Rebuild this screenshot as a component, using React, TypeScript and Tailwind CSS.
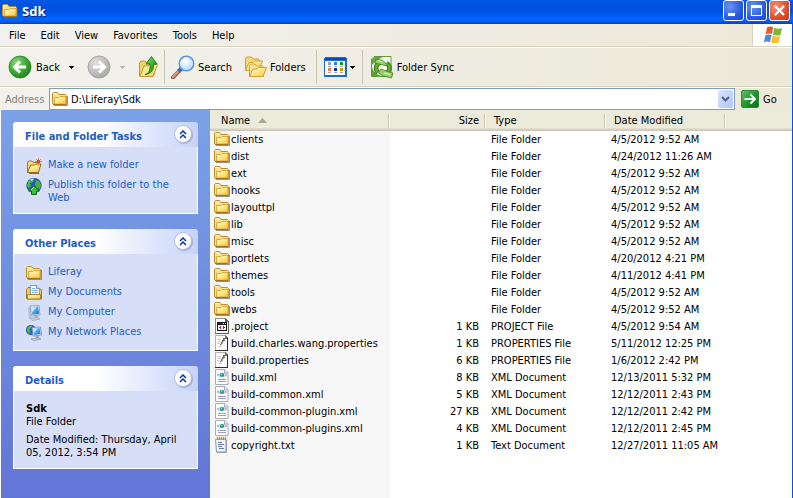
import React from 'react';

type IconProps = { className?: string };

function Gradients() {
  return (
    <svg width="0" height="0" className="absolute" aria-hidden="true">
      <defs>
        <linearGradient id="folderFront" x1="0" y1="0" x2="1" y2="1">
          <stop offset="0" stopColor="#fffbc4" />
          <stop offset="0.5" stopColor="#ffe784" />
          <stop offset="1" stopColor="#f5bf3c" />
        </linearGradient>
        <radialGradient id="greenBall" cx="0.35" cy="0.3" r="0.8">
          <stop offset="0" stopColor="#8fdc7c" />
          <stop offset="0.5" stopColor="#3fae34" />
          <stop offset="1" stopColor="#1c7d1c" />
        </radialGradient>
        <radialGradient id="grayBall" cx="0.35" cy="0.3" r="0.8">
          <stop offset="0" stopColor="#e0e0de" />
          <stop offset="0.6" stopColor="#bcbcba" />
          <stop offset="1" stopColor="#a3a3a1" />
        </radialGradient>
        <linearGradient id="arrowUp" x1="0" y1="0" x2="1" y2="1">
          <stop offset="0" stopColor="#6ee05a" />
          <stop offset="1" stopColor="#0f8a14" />
        </linearGradient>
        <radialGradient id="lens" cx="0.4" cy="0.35" r="0.7">
          <stop offset="0" stopColor="#ffffff" />
          <stop offset="0.6" stopColor="#cfeaff" />
          <stop offset="1" stopColor="#8fc4f4" />
        </radialGradient>
        <linearGradient id="screen" x1="0" y1="0" x2="1" y2="1">
          <stop offset="0" stopColor="#bfeaff" />
          <stop offset="0.5" stopColor="#4aa6ee" />
          <stop offset="1" stopColor="#1c64c8" />
        </linearGradient>
        <linearGradient id="goBox" x1="0" y1="0" x2="1" y2="1">
          <stop offset="0" stopColor="#6cc06c" />
          <stop offset="0.5" stopColor="#1f9a2c" />
          <stop offset="1" stopColor="#0a6a14" />
        </linearGradient>
      </defs>
    </svg>
  );
}

function FolderIcon({ className = '' }: IconProps) {
  return (
    <svg width="16" height="16" viewBox="0 0 16 16" className={`shrink-0 ${className}`} aria-hidden="true">
      <path d="M2 14.500h13.500V5" fill="none" stroke="#6c675a" strokeOpacity=".7" />
      <path d="M.5 12.500V2.500L1.500 1.500h4L7 3.500h6.500l1 1v8.500h-13z" fill="#fbe28c" stroke="#bd8a24" />
      <path d="M2 2.500h3" stroke="#fffbe0" />
      <path d="M2.500 13V6.500h4.500l1-1h6v7.500z" fill="url(#folderFront)" stroke="#d8a844" />
      <path d="M1 13.500h13.500" stroke="#a8720f" />
    </svg>
  );
}

function NewFolderIcon() {
  return (
    <svg width="16" height="16" viewBox="0 0 16 16" className="shrink-0" aria-hidden="true">
      <path d="M1.500 14.500V4l1.500-1h3l1 1.500h5V7" fill="#f8dc80" stroke="#a07820" />
      <path d="M1.500 14.500l3-7.500h4l1-1h5.500l-2.500 8.500z" fill="url(#folderFront)" stroke="#8f6c20" />
      <path d="M3 15.500h10" stroke="#77705c" />
      <path d="M12.500 0v7M9 3.500h7M10 1l5 5M15 1l-5 5" stroke="#f09020" />
      <circle cx="12.500" cy="3.500" r="1.800" fill="#e8401c" />
    </svg>
  );
}

function PublishIcon() {
  return (
    <svg width="16" height="17" viewBox="0 0 16 17" className="shrink-0" aria-hidden="true">
      <circle cx="8" cy="7.500" r="7.300" fill="#2458c0" stroke="#163a80" strokeWidth=".6" />
      <path d="M2 4c2-3 5-3.500 6-3l-1 3-3 1 1 3-2 2-2-2z" fill="#4cb848" />
      <path d="M10 2l3 1 2 4-1 4-3-1-2-3z" fill="#48b044" />
      <path d="M4 1.500c2-1 3-1 4-1L6 3z" fill="#b8e4ff" />
      <path d="M8 7.500l5.500 5.500H10.500v3.500h-5v-3.500H2.500z" fill="#35c435" stroke="#0c6c14" />
      <path d="M8 9l-3 3" stroke="#a8f09c" />
    </svg>
  );
}

function DocumentsIcon() {
  return (
    <svg width="16" height="16" viewBox="0 0 16 16" className="shrink-0" aria-hidden="true">
      <path d="M.5 13.500V4.500l1.500-2h3l1 1.500h8.500l1 1v9H1.500z" fill="#f4cc5c" stroke="#a87818" />
      <path d="M4.500 11V.5h6l3 3V11z" fill="#fff" stroke="#7894c8" />
      <path d="M10.500.5v3h3" fill="#d4e4fa" stroke="#7894c8" />
      <path d="M6 3.500h3M6 5.500h6M6 7.500h6" stroke="#7cb0e8" />
      <path d="M1.500 14V9.500h13V14z" fill="url(#folderFront)" stroke="#b08020" />
    </svg>
  );
}

function ComputerIcon() {
  return (
    <svg width="16" height="16" viewBox="0 0 16 16" className="shrink-0" aria-hidden="true">
      <path d="M2 3l2-1 1 11-2 1z" fill="#b8c0cc" />
      <path d="M4 1l9-.5L14 10l-8.500 1z" fill="#e8eef4" stroke="#8494ac" strokeWidth=".8" />
      <path d="M5 2l7.200-.4L13 9l-6.700.8z" fill="url(#screen)" />
      <path d="M5.500 2.500l5-.3-4.300 5z" fill="#e0f6ff" opacity=".75" />
      <path d="M8.500 11h3l.5 2h-3z" fill="#a8b0bc" />
      <path d="M4 13.500l8-1 2 1.500-8 1.500z" fill="#d4d8de" stroke="#8890a0" strokeWidth=".6" />
    </svg>
  );
}

function NetworkIcon() {
  return (
    <svg width="16" height="16" viewBox="0 0 16 16" className="shrink-0" aria-hidden="true">
      <circle cx="5" cy="5" r="4.800" fill="#2860cc" stroke="#183c80" strokeWidth=".5" />
      <path d="M1 4c1-3 3-3.500 5-3.500L5 3 3 4l1 3-1.500 2z" fill="#58c04c" />
      <path d="M6 2.500l8.500-.5 1 8-8.500 1z" fill="#e8eef4" stroke="#7488a8" strokeWidth=".8" />
      <path d="M7 3.500l6.700-.4.8 6-6.700.8z" fill="url(#screen)" />
      <path d="M7.500 4l4-.2-3.500 4z" fill="#e0f6ff" opacity=".75" />
      <path d="M9.500 11h3l.5 2h-3z" fill="#9ca4b0" />
      <path d="M5 14l7-1 3 1-7 1.500z" fill="#ccd2da" stroke="#8088a0" strokeWidth=".6" />
    </svg>
  );
}

function ProjectFileIcon() {
  return (
    <svg width="16" height="16" viewBox="0 0 16 16" className="shrink-0" shapeRendering="crispEdges" aria-hidden="true">
      <path d="M1 0h10l3 3v12H1z" fill="#fff" />
      <path d="M1 0h10v1H2v14H1z" fill="#8c8c8c" />
      <path d="M11 0h1v1h1v1h1v1h1v13H1v-1h13V4h-3z" fill="#606060" />
      <path d="M3 4h10v9H3z" fill="#101010" />
      <path d="M4 5h8v1H4z" fill="#1030c0" />
      <path d="M9 5h1v1H9zM11 5h1v1h-1z" fill="#fff" />
      <path d="M4 7h8v5H4z" fill="#fff" />
      <path d="M5 9h1v1H5zM6 8h1v3H6z" fill="#e02020" />
      <path d="M9 8h1v3H9zM10 9h1v1h-1z" fill="#2040d0" />
    </svg>
  );
}

function PropertiesFileIcon() {
  return (
    <svg width="16" height="16" viewBox="0 0 16 16" className="shrink-0" shapeRendering="crispEdges" aria-hidden="true">
      <path d="M1 0h10l3 3v12H1z" fill="#fff" />
      <path d="M1 0h10v1H2v14H1z" fill="#b0b0b0" />
      <path d="M11 0h1v1h1v1h1v1h-1v1h-2z" fill="#707070" />
      <path d="M13 3h1v13H1v-1h12z" fill="#303030" />
      <path d="M3 4h4v1H3zM4 6h3v1H4zM3 8h3v1H3zM5 11h3v1H5z" fill="#c8ccd4" />
      <path d="M9 3h3v1H9zM9 4h2v2H9zM8 5h1v2H8zM7 7h1v2H7zM6 9h1v1H6z" fill="#646458" />
      <path d="M10 4h1v1h-1zM9 6h1v1H9zM8 7h1v2H8zM7 9h1v1H7z" fill="#b8b090" />
    </svg>
  );
}

function XmlFileIcon() {
  return (
    <svg width="16" height="16" viewBox="0 0 16 16" className="shrink-0" aria-hidden="true">
      <path d="M1.500.5h9.500l3 3v12H1.500z" fill="#fdfdff" stroke="#a8acb8" />
      <path d="M10.500.5v3.500h3.500" fill="#e4e6f0" stroke="#a8acb8" />
      <ellipse cx="8" cy="6" rx="2.500" ry="2" fill="#2c9c8c" />
      <path d="M7 5.500h1" stroke="#a0ecd8" />
      <path d="M5 4.500L3.500 6 5 7.500M11 4.500L12.500 6 11 7.500" fill="none" stroke="#7c80a0" />
      <path d="M4 10.500h8M4 12.500h8" stroke="#9ca0c4" />
    </svg>
  );
}

function TextFileIcon() {
  return (
    <svg width="16" height="16" viewBox="0 0 16 16" className="shrink-0" aria-hidden="true">
      <path d="M3 15.500h9.500V3" fill="none" stroke="#a0a6b4" />
      <path d="M1.500 2.500h10.500v12.500H2.500z" fill="#e8f4fc" stroke="#8c98b0" />
      <path d="M2 1.500h10.500" stroke="#e4d4a0" strokeWidth="2" />
      <path d="M3.500 0v3M5.500 0v3M7.500 0v3M9.500 0v3M11.500 0v3" stroke="#847860" strokeWidth=".8" />
      <path d="M4 5.500h4M4 7.500h6M4 9.500h4M5 11.500h5" stroke="#6c7c98" />
    </svg>
  );
}

function BackIcon() {
  return (
    <svg width="24" height="24" viewBox="0 0 24 24" className="shrink-0" aria-hidden="true">
      <circle cx="12" cy="12" r="11" fill="url(#greenBall)" stroke="#2a7a2a" strokeWidth=".8" />
      <path d="M12 6.500L6.500 12l5.500 5.500M7 12h11" fill="none" stroke="#fff" strokeWidth="3" />
    </svg>
  );
}

function ForwardIcon() {
  return (
    <svg width="24" height="24" viewBox="0 0 24 24" className="shrink-0" aria-hidden="true">
      <circle cx="12" cy="12" r="11" fill="url(#grayBall)" stroke="#989896" strokeWidth=".8" />
      <path d="M12 6.500l5.500 5.500-5.500 5.500M17 12H6" fill="none" stroke="#fff" strokeWidth="3" />
    </svg>
  );
}

function UpIcon() {
  return (
    <svg width="20" height="24" viewBox="0 0 20 24" className="shrink-0" aria-hidden="true">
      <path d="M1.500 21V8l1.500-2h4l1.500 2H16l1 3-1 9z" fill="#f4d068" stroke="#c89830" />
      <path d="M2 21.500L6 11h4l1.500-1.500h8L15 21.500z" fill="url(#folderFront)" stroke="#c89830" />
      <path d="M7 19.500c4-1 5.500-4.500 5-10.500H8L13.500 1.500 19 9h-3.500c.5 6-2.500 10-8.500 10.500z" fill="url(#arrowUp)" stroke="#187818" strokeWidth=".9" />
    </svg>
  );
}

function SearchIcon() {
  return (
    <svg width="24" height="24" viewBox="0 0 24 24" className="shrink-0" aria-hidden="true">
      <path d="M10 14L2 22.500" stroke="#7c5a50" strokeWidth="4" strokeLinecap="round" />
      <path d="M9.500 14L2 22" stroke="#e8946c" strokeWidth="2.400" strokeLinecap="round" />
      <path d="M10.500 13.500l-3 3" stroke="#3c68c8" strokeWidth="4" />
      <circle cx="15.500" cy="8.500" r="7.200" fill="url(#lens)" stroke="#5c94dc" strokeWidth="1.600" />
      <circle cx="15.500" cy="8.500" r="5.800" fill="none" stroke="#d4ecff" strokeWidth="1" />
      <path d="M11.500 7.500c.5-2 2-3.500 4.500-3.500" fill="none" stroke="#fff" strokeWidth="1.800" />
    </svg>
  );
}

function FoldersIcon() {
  return (
    <svg width="24" height="22" viewBox="0 0 24 22" className="shrink-0" aria-hidden="true">
      <path d="M1.500 14.500V2.500L3 1h4.500L9 3h5.500l1 1.500v10z" fill="#f8d878" stroke="#d0a03c" />
      <path d="M1.500 14.500L5 6.500h4L10.500 5h8L15 14.500z" fill="url(#folderFront)" stroke="#d0a03c" />
      <path d="M5.500 20.500V9.500L7 8h4l1.500 2h6l1 1.500v9z" fill="#fbe496" stroke="#d0a03c" />
      <path d="M5.500 20.500L9 13h4l1.500-1.500h8L19 20.500z" fill="url(#folderFront)" stroke="#d0a03c" />
    </svg>
  );
}

function ViewsIcon() {
  return (
    <svg width="23" height="20" viewBox="0 0 23 20" className="shrink-0" shapeRendering="crispEdges" aria-hidden="true">
      <path d="M0 1h1V0h21v1h1v19H0z" fill="#1c6ad8" />
      <path d="M1 1h21v2H1z" fill="#0a4cb0" />
      <path d="M1 4h20v14H1z" fill="#fff" />
      <path d="M4 5h3v3H4z" fill="#9c98c8" />
      <path d="M10 5h3v3h-3z" fill="#1c84e8" />
      <path d="M16 5h3v3h-3z" fill="#0c9c14" />
      <path d="M4 11h3v3H4z" fill="#f47c50" />
      <path d="M10 11h3v3h-3z" fill="#083090" />
      <path d="M16 11h3v3h-3z" fill="#cc9c04" />
      <path d="M4 9h3v1H4zM10 9h3v1h-3zM16 9h3v1h-3zM4 15h3v1H4zM10 15h3v1h-3zM16 15h3v1h-3z" fill="#a8a8a8" />
    </svg>
  );
}

function SyncIcon() {
  return (
    <svg width="24" height="24" viewBox="0 0 24 24" className="shrink-0" aria-hidden="true">
      <path d="M4 1.500h17v20H1.500V4z" fill="#f4faf0" stroke="#5c9c3c" />
      <path d="M2 10V4.500L4.500 2H13C8 4 5 7 2 10z" fill="#68a838" />
      <path d="M2 12c1 5 5 8 10 9H2z" fill="#5ca030" />
      <path d="M8 17.500C4.500 14 6 8 11 7.500" fill="none" stroke="#2c7414" strokeWidth="4.500" />
      <path d="M8 17.500C4.500 14 6 8 11 7.500" fill="none" stroke="#68ac38" strokeWidth="2.500" />
      <path d="M16.500 8c4 3 4 7 .5 9.500" fill="none" stroke="#2c7414" strokeWidth="4.500" />
      <path d="M16.500 8c4 3 4 7 .5 9.500" fill="none" stroke="#68ac38" strokeWidth="2.500" />
      <path d="M6 4l7 1.500L18 11l-5-1-8-2z" fill="#98d068" stroke="#3c8420" strokeWidth=".8" />
      <path d="M11 14l5 2 7 2-1.500 5-8-2-5-3z" fill="#98d068" stroke="#3c8420" strokeWidth=".8" />
      <path d="M8 5.500l5 1.500M14 18l6 1.500" stroke="#e4f8d4" />
    </svg>
  );
}

function WindowsFlag() {
  return (
    <svg width="20" height="18" viewBox="0 0 20 18" className="shrink-0" aria-hidden="true">
      <path d="M4 1.500C6 .2 8 .2 10.200 1.200L8.800 8C6.700 7.200 4.800 7.300 2.700 8.300z" fill="#e8582c" />
      <path d="M11.200 1.700c2.500 1.200 5 1.300 8 .3l-1.700 7c-2.700 1-5.200.7-7.700-.5z" fill="#7cb83c" />
      <path d="M2.400 9.300c2-1 4-1.100 6.100-.2L7 16C5 15.200 3 15.200.8 16.200z" fill="#4c88d8" />
      <path d="M9.600 9.600c2.500 1.100 5 1.300 7.600.4l-1.700 6.700c-2.500.9-5 .7-7.500-.3z" fill="#f4c02c" />
    </svg>
  );
}

function DownTriangle({ className = '' }: IconProps) {
  return (
    <svg width="5" height="3" viewBox="0 0 5 3" shapeRendering="crispEdges" className={`shrink-0 ${className}`} aria-hidden="true">
      <path d="M0 0h5v1H0zM1 1h3v1H1zM2 2h1v1H2z" fill="currentColor" />
    </svg>
  );
}

function CollapseButton({ label }: { label: string }) {
  return (
    <button
      aria-label={`Collapse ${label}`}
      className="flex size-[18px] shrink-0 items-center justify-center rounded-full border border-[#b4bfe0] bg-white shadow-[1px_1px_1px_#a0acd0]"
    >
      <svg width="8" height="9" viewBox="0 0 8 9" aria-hidden="true">
        <path d="M1 4l3-3 3 3M1 8l3-3 3 3" fill="none" stroke="#00389c" strokeWidth="1.500" />
      </svg>
    </button>
  );
}

function Panel({ title, children }: { title: string; children: React.ReactNode }) {
  return (
    <section>
      <div className="flex h-[25px] items-center justify-between rounded-t-[3px] bg-linear-to-r from-white from-45% to-[#c6d3f7] pr-[6px] pb-px pl-3">
        <h2 className="pt-1 font-bold text-[#215dc6]">{title}</h2>
        <CollapseButton label={title} />
      </div>
      <div className="border border-t-0 border-white bg-[#d6dff7] px-3">{children}</div>
    </section>
  );
}

function PanelLink({ icon, children }: { icon: React.ReactNode; children: React.ReactNode }) {
  return (
    <li>
      <a href="#" className="flex items-start gap-[6px] text-[#215dc6]">
        {icon}
        <span className="leading-[13px]">{children}</span>
      </a>
    </li>
  );
}

function ToolSeparator() {
  return <div className="my-0.5 w-px self-stretch bg-[#c8c4b0]" />;
}

type FileRow = { name: string; kind: 'folder' | 'project' | 'properties' | 'xml' | 'text'; size?: string; type: string; date: string };

const files: FileRow[] = [
  { name: 'clients', kind: 'folder', type: 'File Folder', date: '4/5/2012 9:52 AM' },
  { name: 'dist', kind: 'folder', type: 'File Folder', date: '4/24/2012 11:26 AM' },
  { name: 'ext', kind: 'folder', type: 'File Folder', date: '4/5/2012 9:52 AM' },
  { name: 'hooks', kind: 'folder', type: 'File Folder', date: '4/5/2012 9:52 AM' },
  { name: 'layouttpl', kind: 'folder', type: 'File Folder', date: '4/5/2012 9:52 AM' },
  { name: 'lib', kind: 'folder', type: 'File Folder', date: '4/5/2012 9:52 AM' },
  { name: 'misc', kind: 'folder', type: 'File Folder', date: '4/5/2012 9:52 AM' },
  { name: 'portlets', kind: 'folder', type: 'File Folder', date: '4/20/2012 4:21 PM' },
  { name: 'themes', kind: 'folder', type: 'File Folder', date: '4/11/2012 4:41 PM' },
  { name: 'tools', kind: 'folder', type: 'File Folder', date: '4/5/2012 9:52 AM' },
  { name: 'webs', kind: 'folder', type: 'File Folder', date: '4/5/2012 9:52 AM' },
  { name: '.project', kind: 'project', size: '1 KB', type: 'PROJECT File', date: '4/5/2012 9:54 AM' },
  { name: 'build.charles.wang.properties', kind: 'properties', size: '1 KB', type: 'PROPERTIES File', date: '5/11/2012 12:25 PM' },
  { name: 'build.properties', kind: 'properties', size: '6 KB', type: 'PROPERTIES File', date: '1/6/2012 2:42 PM' },
  { name: 'build.xml', kind: 'xml', size: '8 KB', type: 'XML Document', date: '12/13/2011 5:32 PM' },
  { name: 'build-common.xml', kind: 'xml', size: '5 KB', type: 'XML Document', date: '12/12/2011 2:43 PM' },
  { name: 'build-common-plugin.xml', kind: 'xml', size: '27 KB', type: 'XML Document', date: '12/12/2011 2:42 PM' },
  { name: 'build-common-plugins.xml', kind: 'xml', size: '4 KB', type: 'XML Document', date: '12/12/2011 2:45 PM' },
  { name: 'copyright.txt', kind: 'text', size: '1 KB', type: 'Text Document', date: '12/27/2011 11:05 AM' },
];

const fileIcons = {
  folder: FolderIcon,
  project: ProjectFileIcon,
  properties: PropertiesFileIcon,
  xml: XmlFileIcon,
  text: TextFileIcon,
};

function HeaderCell({ className = '', children }: { className?: string; children?: React.ReactNode }) {
  return (
    <th scope="col" className="h-5 p-0 text-left font-normal">
      <div className={`flex h-[14px] items-center border-r border-[#c7c5b2] shadow-[1px_0_0_#fff] ${className}`}>{children}</div>
    </th>
  );
}

function FileTable() {
  return (
    <main className="min-w-0 flex-1 bg-[linear-gradient(to_right,#f7f7f7_180px,#ffffff_180px)]">
      <table className="w-full table-fixed border-collapse whitespace-nowrap">
        <colgroup>
          <col className="w-[179px]" />
          <col className="w-24" />
          <col className="w-[120px]" />
          <col className="w-[120px]" />
          <col />
        </colgroup>
        <thead className="bg-[#ebeadb] bg-[linear-gradient(to_top,#cbc7b8_1px,#d6d2c2_1px,#d6d2c2_2px,#e2decd_2px,#e2decd_3px,#ebeadb_3px)]">
          <tr className="h-[21px]">
            <HeaderCell className="gap-2 pl-[11px]">
              Name
              <svg width="9" height="5" viewBox="0 0 9 5" aria-hidden="true">
                <path d="M0 5l4.500-5L9 5z" fill="#aca899" />
              </svg>
            </HeaderCell>
            <HeaderCell className="justify-end pr-[5px]">Size</HeaderCell>
            <HeaderCell className="pl-[9px]">Type</HeaderCell>
            <HeaderCell className="pl-[9px]">Date Modified</HeaderCell>
            <td />
          </tr>
        </thead>
        <tbody>
          {files.map((f) => {
            const Icon = fileIcons[f.kind];
            return (
              <tr key={f.name} className="h-[17px] leading-[17px]">
                <td className="p-0">
                  <div className="flex h-[17px] items-start gap-px pl-1">
                    <Icon />
                    <span>{f.name}</span>
                  </div>
                </td>
                <td className="p-0 pr-[6px] text-right">{f.size}</td>
                <td className="p-0 pl-[6px]">{f.type}</td>
                <td className="p-0 pl-[6px]">{f.date}</td>
                <td className="p-0" />
              </tr>
            );
          })}
        </tbody>
      </table>
    </main>
  );
}

const captionButton = 'flex size-[21px] items-center justify-center rounded-[3px] border border-white';

export default function App() {
  return (
    <div className="flex min-h-screen flex-col bg-white font-['DejaVu_Sans_Condensed','Noto_Sans',sans-serif] text-[11px] leading-[13px] text-black">
      <Gradients />
      <header className="flex h-6 items-start justify-between bg-[linear-gradient(to_bottom,#0058e6_0%,#0050e0_30%,#0055ea_55%,#0066ff_80%,#005cf0_90%,#003dc0_100%)] pr-[3px] pl-[2px]">
        <div className="flex items-center gap-1 pt-[2px]">
          <FolderIcon />
          <h1 className="font-['Open_Sans',sans-serif] text-[13px] leading-[18px] font-bold text-white [text-shadow:1px_1px_0_#0a2a80]">Sdk</h1>
        </div>
        <div className="flex gap-[2px]">
          <button aria-label="Minimize" className={`${captionButton} bg-[radial-gradient(circle_at_30%_30%,#6c94f0,#2a5ce0_60%,#1c48c8)]`}>
            <svg width="15" height="15" viewBox="0 0 15 15" aria-hidden="true">
              <path d="M2 10h7v3H2z" fill="#fff" />
            </svg>
          </button>
          <button aria-label="Maximize" className={`${captionButton} bg-[radial-gradient(circle_at_30%_30%,#6c94f0,#2a5ce0_60%,#1c48c8)]`}>
            <svg width="15" height="15" viewBox="0 0 15 15" shapeRendering="crispEdges" aria-hidden="true">
              <path d="M2 2h11v11H2zM3 5v7h9V5z" fill="#fff" fillRule="evenodd" />
            </svg>
          </button>
          <button aria-label="Close" className={`${captionButton} bg-[radial-gradient(circle_at_30%_30%,#f09478,#e0502c_60%,#c03c14)]`}>
            <svg width="15" height="15" viewBox="0 0 15 15" aria-hidden="true">
              <path d="M3 3l9 9M12 3l-9 9" stroke="#fff" strokeWidth="2.200" />
            </svg>
          </button>
        </div>
      </header>

      <div className="flex flex-1 flex-col border-r border-[#0054e3]">
        <div className="bg-linear-to-r from-[#f2f1ed] to-[#ece9d8]">
          <nav className="flex h-[23px] items-stretch justify-between border-b border-[#d8d2bd]">
            <div className="flex items-center gap-[15px] pl-[9px]">
              <button>File</button>
              <button>Edit</button>
              <button>View</button>
              <button>Favorites</button>
              <button>Tools</button>
              <button>Help</button>
            </div>
            <div className="flex w-10 items-center justify-center border-l border-[#d8d2bd] bg-white">
              <WindowsFlag />
            </div>
          </nav>

          <div className="flex h-10 items-center border-t border-b border-t-white border-b-[#d8d2bd] pl-2">
            <button className="flex items-center gap-1">
              <BackIcon />
              Back
            </button>
            <button aria-label="Back history" className="flex w-[27px] justify-center pr-1">
              <DownTriangle />
            </button>
            <button aria-label="Forward" className="flex items-center">
              <ForwardIcon />
            </button>
            <button aria-label="Forward history" className="flex w-[27px] justify-center pr-1">
              <DownTriangle className="text-[#b8b6a8]" />
            </button>
            <button aria-label="Up" className="pr-[6px]">
              <UpIcon />
            </button>
            <ToolSeparator />
            <button className="flex items-center gap-[3px] pr-3 pl-[6px]">
              <SearchIcon />
              Search
            </button>
            <button className="flex items-center gap-[2px] pr-[10px]">
              <FoldersIcon />
              Folders
            </button>
            <ToolSeparator />
            <button aria-label="Views" className="flex items-center gap-[3px] px-[7px]">
              <ViewsIcon />
              <DownTriangle />
            </button>
            <ToolSeparator />
            <button className="flex items-center gap-[3px] pl-[7px]">
              <SyncIcon />
              Folder Sync
            </button>
          </div>

          <form className="flex h-[23px] items-center border-t border-white" onSubmit={(e) => e.preventDefault()}>
            <label htmlFor="address" className="w-[49px] shrink-0 pl-[5px] text-[#84827a]">
              Address
            </label>
            <div className="flex h-[22px] min-w-0 flex-1 items-center border border-[#7f9db9] bg-white pr-px pl-[2px]">
              <FolderIcon />
              <input id="address" defaultValue="D:\Liferay\Sdk" className="h-full min-w-0 flex-1 bg-transparent pl-[3px] outline-none" />
              <button type="button" aria-label="Show addresses" className="flex h-[18px] w-[15px] items-center justify-center rounded-[2px] bg-linear-to-br from-[#d8e4fd] to-[#b0c6f6]">
                <svg width="9" height="6" viewBox="0 0 9 6" aria-hidden="true">
                  <path d="M1 1l3.500 3.500L8 1" fill="none" stroke="#4d6185" strokeWidth="2" />
                </svg>
              </button>
            </div>
            <button className="flex w-[57px] items-center gap-1 pl-[6px]">
              <svg width="18" height="18" viewBox="0 0 18 18" aria-hidden="true">
                <rect x=".5" y=".5" width="17" height="17" rx="1.500" fill="url(#goBox)" stroke="#2c8c3c" />
                <path d="M3.500 9h10M9.500 4.500L14 9l-4.500 4.500" fill="none" stroke="#fff" strokeWidth="2" />
              </svg>
              Go
            </button>
          </form>
        </div>

        <div className="flex flex-1 pl-px">
          <aside className="flex w-[209px] shrink-0 flex-col gap-[15px] bg-linear-to-b from-[#7ba2e7] to-[#6375d6] px-3 pt-3">
            <Panel title="File and Folder Tasks">
              <ul className="flex flex-col gap-1 pt-[11px] pb-[9px]">
                <PanelLink icon={<NewFolderIcon />}>Make a new folder</PanelLink>
                <PanelLink icon={<PublishIcon />}>Publish this folder to the Web</PanelLink>
              </ul>
            </Panel>
            <Panel title="Other Places">
              <ul className="flex flex-col gap-1 pt-[11px] pb-[9px]">
                <PanelLink icon={<FolderIcon />}>Liferay</PanelLink>
                <PanelLink icon={<DocumentsIcon />}>My Documents</PanelLink>
                <PanelLink icon={<ComputerIcon />}>My Computer</PanelLink>
                <PanelLink icon={<NetworkIcon />}>My Network Places</PanelLink>
              </ul>
            </Panel>
            <Panel title="Details">
              <div className="pt-[11px] pb-[9px]">
                <p className="font-bold">Sdk</p>
                <p>File Folder</p>
                <p className="pt-[5px]">Date Modified: Thursday, April 05, 2012, 3:54 PM</p>
              </div>
            </Panel>
          </aside>
          <FileTable />
        </div>
      </div>
    </div>
  );
}
